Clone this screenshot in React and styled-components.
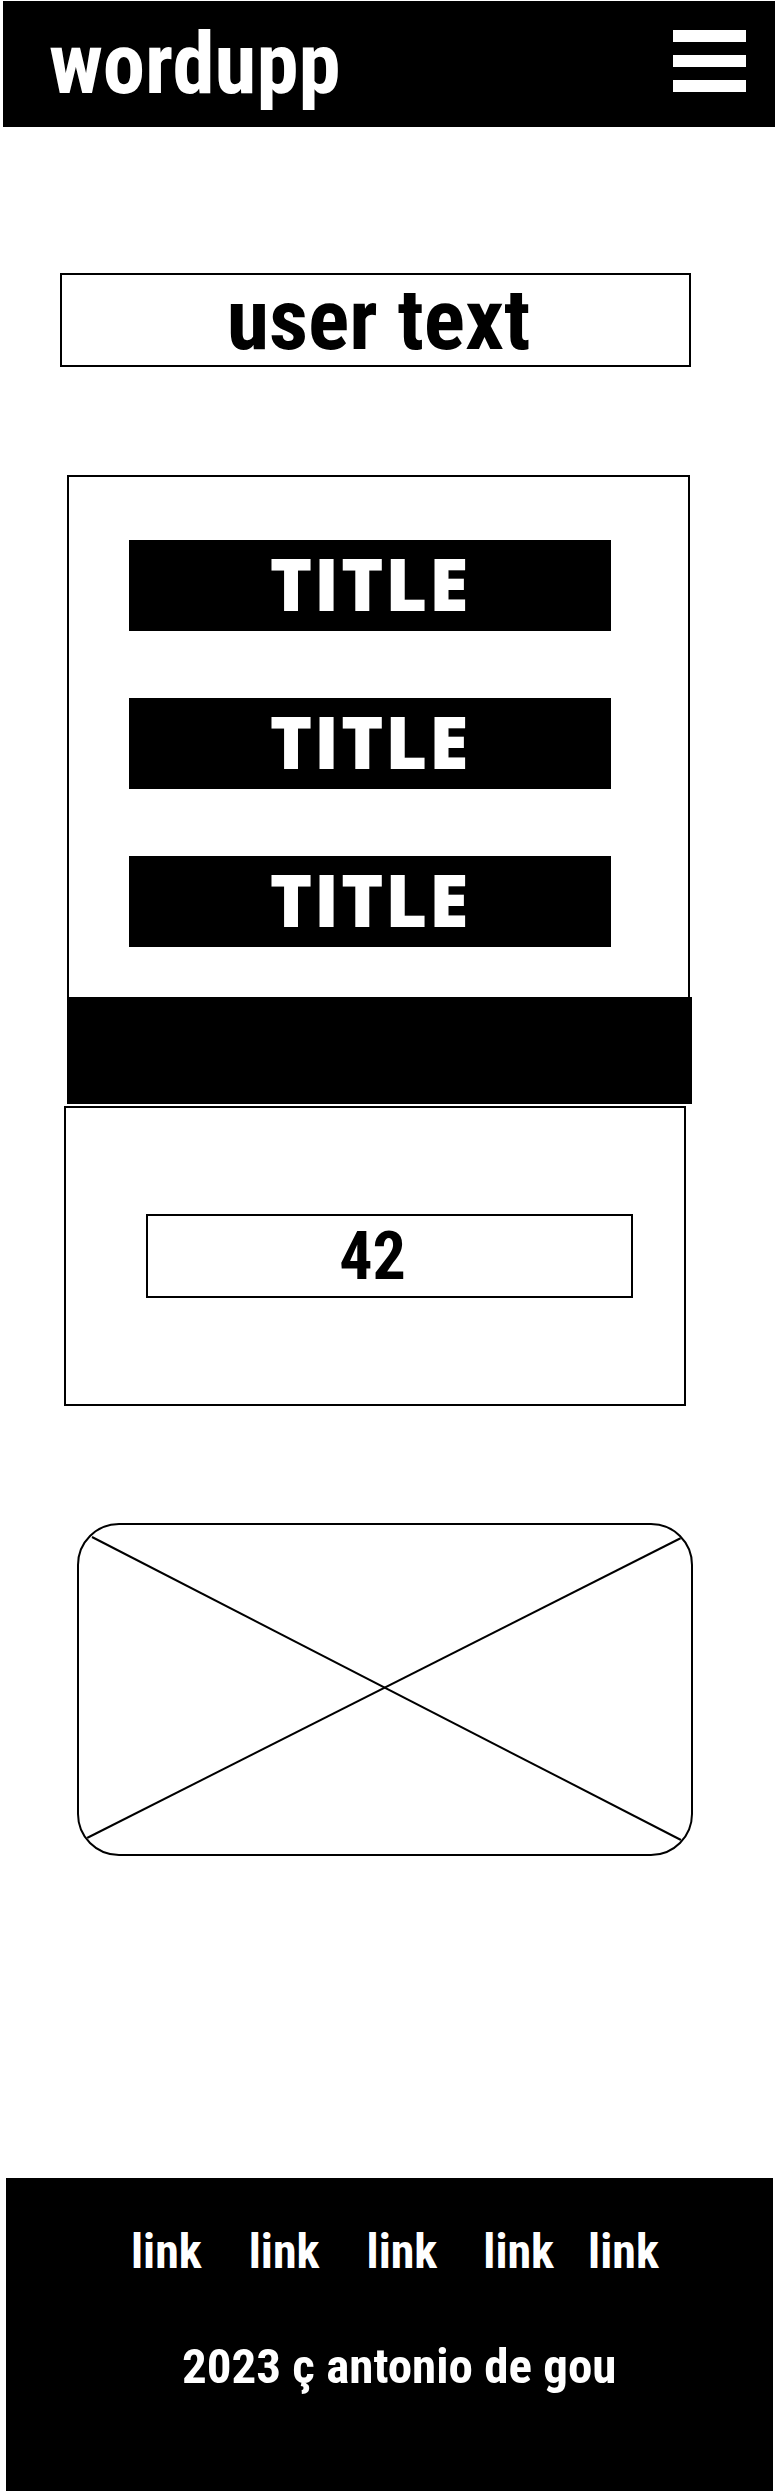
import React from "react";
import styled, { createGlobalStyle } from "styled-components";

const Global = createGlobalStyle`
  html, body { margin: 0; padding: 0; background: #fff; }
  body { width: 775px; font-family: "Roboto Condensed", "Roboto", "Liberation Sans", sans-serif; }
  * { box-sizing: border-box; }
`;

const Page = styled.div`
  width: 775px;
  display: flex;
  flex-direction: column;
  align-items: flex-start;
`;

const Header = styled.header`
  margin: 1px 0 0 3px;
  width: 772px;
  height: 126px;
  background: #000;
  display: flex;
  align-items: flex-start;
  justify-content: space-between;
  padding: 0 29px 0 46px;
`;

const Logo = styled.div`
  margin-top: 21px;
  color: #fff;
  font-family: "Roboto Condensed", "Roboto", sans-serif;
  font-weight: 700;
  font-size: 85px;
  line-height: 1;
`;

const Burger = styled.button`
  margin-top: 29px;
  width: 73px;
  padding: 0;
  border: 0;
  background: transparent;
  display: flex;
  flex-direction: column;
  gap: 13px;
`;

const BurgerBar = styled.span`
  display: block;
  height: 12px;
  background: #fff;
`;

const UserText = styled.div`
  margin: 146px 0 0 60px;
  width: 631px;
  height: 94px;
  border: 2px solid #000;
  display: flex;
  align-items: center;
  justify-content: center;
  padding-left: 6px;
  font-weight: 700;
  font-size: 86px;
  line-height: 1;
  color: #000;
`;

const Card = styled.section`
  margin: 108px 0 0 67px;
  width: 625px;
  display: flex;
  flex-direction: column;
`;

const CardBody = styled.div`
  width: 623px;
  border: 2px solid #000;
  border-bottom: 0;
  padding: 63px 0 50px 60px;
  display: flex;
  flex-direction: column;
  gap: 67px;
`;

const TitleBar = styled.div`
  width: 482px;
  height: 91px;
  background: #000;
  color: #fff;
  display: flex;
  align-items: center;
  justify-content: center;
  font-family: "Open Sans", "DejaVu Sans", sans-serif;
  font-weight: 800;
  font-size: 72px;
  letter-spacing: 1.8px;
  line-height: 1;
  padding-bottom: 6px;
`;

const CardFoot = styled.div`
  width: 625px;
  height: 107px;
  background: #000;
`;

const CounterBox = styled.section`
  margin: 2px 0 0 64px;
  width: 622px;
  height: 300px;
  border: 2px solid #000;
  padding-left: 80px;
  display: flex;
  align-items: center;
`;

const CounterValue = styled.div`
  width: 487px;
  height: 84px;
  border: 2px solid #000;
  display: flex;
  align-items: center;
  justify-content: center;
  padding-right: 34px;
  font-weight: 700;
  font-size: 66px;
  line-height: 1;
  padding-top: 2px;
`;

const ImageBox = styled.div`
  margin: 117px 0 0 77px;
  width: 616px;
  height: 333px;
  border: 2px solid #000;
  border-radius: 42px;
  overflow: hidden;
`;

const Cross = styled.svg`
  display: block;
  width: 100%;
  height: 100%;
`;

const Footer = styled.footer`
  margin: 322px 0 0 6px;
  width: 767px;
  height: 313px;
  background: #000;
  color: #fff;
  display: flex;
  flex-direction: column;
  align-items: flex-start;
  padding: 50px 0 0 125px;
  font-weight: 700;
  font-size: 48px;
  line-height: 1;
`;

const Links = styled.nav`
  display: flex;
`;

const FootLink = styled.a`
  color: #fff;
  text-decoration: none;
  margin-right: ${(p) => p.$gap}px;
`;

const Copy = styled.div`
  margin: 66px 0 0 51px;
  font-size: 49px;
`;

const links = [47, 47, 46, 34, 0];

export default function App() {
  return (
    <>
      <Global />
      <Page>
        <Header>
          <Logo>wordupp</Logo>
          <Burger aria-label="menu">
            <BurgerBar />
            <BurgerBar />
            <BurgerBar />
          </Burger>
        </Header>

        <UserText>user text</UserText>

        <Card>
          <CardBody>
            <TitleBar>TITLE</TitleBar>
            <TitleBar>TITLE</TitleBar>
            <TitleBar>TITLE</TitleBar>
          </CardBody>
          <CardFoot />
        </Card>

        <CounterBox>
          <CounterValue>42</CounterValue>
        </CounterBox>

        <ImageBox>
          <Cross viewBox="0 0 612 329" preserveAspectRatio="none">
            <line x1="13" y1="12" x2="602" y2="315" stroke="#000" strokeWidth="2" />
            <line x1="602" y1="13" x2="8" y2="313" stroke="#000" strokeWidth="2" />
          </Cross>
        </ImageBox>

        <Footer>
          <Links>
            {links.map((g, i) => (
              <FootLink key={i} href="#" $gap={g}>
                link
              </FootLink>
            ))}
          </Links>
          <Copy>2023 ç antonio de gou</Copy>
        </Footer>
      </Page>
    </>
  );
}
